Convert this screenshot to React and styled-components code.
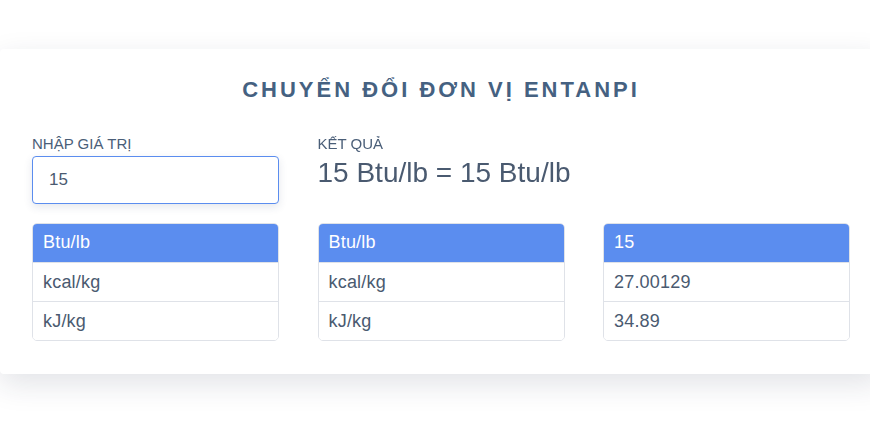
import React, { useState } from 'react';
import styled, { createGlobalStyle } from 'styled-components';

const GlobalStyle = createGlobalStyle`
    html, body {
        margin: 0;
        padding: 0;
        background: #fff;
        overflow: hidden;
    }
    body {
        font-family: "Liberation Sans", Arial, sans-serif;
    }
`;

const Page = styled.div`
    padding-top: 49px;
    width: 870px;
    height: 426px;
    box-sizing: border-box;
    overflow: hidden;
`;

const Card = styled.div`
    width: 882px;
    box-sizing: border-box;
    padding: 28px 32px 33px;
    background: #fff;
    border-radius: 4px;
    box-shadow: 0 10px 30px rgba(30, 40, 70, 0.13);
`;

const Title = styled.h2`
    margin: 0 0 32px;
    text-align: center;
    font-size: 22px;
    line-height: 26px;
    font-weight: bold;
    letter-spacing: 3px;
    color: #456181;
`;

const Grid = styled.div`
    display: grid;
    grid-template-columns: repeat(3, minmax(0, 1fr));
    column-gap: 38.5px;
`;

const Field = styled.div`
    display: flex;
    flex-direction: column;
`;

const Label = styled.label`
    font-size: 15px;
    color: #4a5e78;
    text-transform: uppercase;
    line-height: 17px;
    margin-bottom: 4px;
`;

const Input = styled.input`
    box-sizing: border-box;
    height: 48px;
    width: 100%;
    padding: 0 16px;
    border: 1px solid #5b8def;
    border-radius: 4px;
    font-family: inherit;
    font-size: 17px;
    color: #4a5a70;
    caret-color: #2c3e55;
    box-shadow: 0 3px 8px rgba(40, 60, 100, 0.12);
    outline: none;
`;

const Result = styled.div`
    font-size: 28px;
    color: #4a5a70;
    line-height: 32px;
    margin-top: 1px;
    white-space: nowrap;
`;

const UnitList = styled.ul`
    list-style: none;
    margin: 19px 0 0;
    padding: 0;
    border: 1px solid #dfe2e8;
    border-radius: 5px;
    overflow: hidden;
`;

const UnitItem = styled.li`
    height: 38px;
    display: flex;
    align-items: center;
    padding: 0 10px;
    font-size: 18px;
    letter-spacing: 0.2px;
    color: ${props => props.active ? '#fff' : '#4a5a70'};
    background: ${props => props.active ? '#5b8def' : '#fff'};
    border-top: ${props => props.first ? 'none' : '1px solid #dfe2e8'};
    ${props => props.active && 'height: 39px; margin: -1px -1px 0; padding: 0 11px;'}
`;

const units = ['Btu/lb', 'kcal/kg', 'kJ/kg'];
const factors = { 'Btu/lb': 1, 'kcal/kg': 1.800086, 'kJ/kg': 2.326 };

const Column = ({ items }) => (
    <UnitList>
        {items.map((text, i) => (
            <UnitItem key={i} active={i === 0} first={i === 0}>{text}</UnitItem>
        ))}
    </UnitList>
);

const App = () => {
    const [value, setValue] = useState('15');
    const n = parseFloat(value) || 0;
    const converted = ['15', '27.00129', '34.89'];

    return (
        <Page>
            <GlobalStyle />
            <Card>
                <Title>CHUYỂN ĐỔI ĐƠN VỊ ENTANPI</Title>
                <Grid>
                    <Field>
                        <Label>Nhập giá trị</Label>
                        <Input value={value} onChange={e => setValue(e.target.value)} autoFocus />
                    </Field>
                    <Field>
                        <Label>Kết quả</Label>
                        <Result>{`${n} Btu/lb = ${n * factors['Btu/lb']} Btu/lb`}</Result>
                    </Field>
                    <div />
                    <Column items={units} />
                    <Column items={units} />
                    <Column items={converted} />
                </Grid>
            </Card>
        </Page>
    );
};

export default App;
